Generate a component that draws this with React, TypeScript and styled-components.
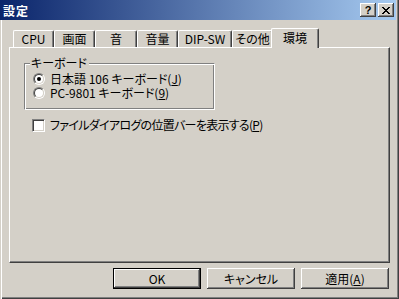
import React from "react";
import styled, { createGlobalStyle } from "styled-components";

const GlobalStyle = createGlobalStyle`
  html, body {
    margin: 0;
    padding: 0;
    background: #d4d0c8;
  }
  body {
    font-family: "Noto Sans CJK JP", "Noto Sans", sans-serif;
    font-size: 12px;
    font-feature-settings: "palt";
    color: #000;
  }
`;

// classic 3d window frame, title bar flush with the top edge
const Window = styled.div`
  width: 399px;
  height: 299px;
  box-sizing: border-box;
  padding: 0 3px 3px 0;
  display: flex;
  flex-direction: column;
  background: #d4d0c8;
  box-shadow: inset 1px 0 0 #d4d0c8, inset 2px 0 0 #ffffff,
    inset -1px -1px 0 #404040, inset -2px -2px 0 #808080;
`;

const TitleBar = styled.div`
  height: 20px;
  display: flex;
  align-items: center;
  padding: 0 2px 0 3px;
  background: linear-gradient(to right, #0a246a, #a6caf0);
`;

const TitleText = styled.div`
  flex: 1;
  color: #fff;
  font-weight: bold;
  font-size: 12px;
  letter-spacing: 1px;
`;

const TitleButtons = styled.div`
  display: flex;
  gap: 2px;
`;

const TitleButton = styled.div`
  width: 16px;
  height: 14px;
  box-sizing: border-box;
  display: flex;
  align-items: center;
  justify-content: center;
  background: #d4d0c8;
  font-family: "Liberation Sans", sans-serif;
  font-weight: bold;
  font-size: 11px;
  box-shadow: inset -1px -1px 0 #404040, inset 1px 1px 0 #ffffff,
    inset -2px -2px 0 #808080;
`;

const Body = styled.div`
  flex: 1;
  display: flex;
  flex-direction: column;
  padding: 8px 6px 0 9px;
`;

const TabStrip = styled.div`
  height: 19px;
  display: flex;
  align-items: flex-end;
  padding-left: 4px;
  position: relative;
  z-index: 1;
`;

const Tab = styled.div<{ $width: number; $active?: boolean }>`
  box-sizing: border-box;
  width: ${({ $width, $active }) => $width + ($active ? 4 : 0)}px;
  height: ${({ $active }) => ($active ? 20 : 17)}px;
  margin: ${({ $active }) => ($active ? "0 -2px -1px -2px" : "0")};
  padding-bottom: ${({ $active }) => ($active ? 3 : 1)}px;
  display: flex;
  align-items: center;
  justify-content: center;
  background: #d4d0c8;
  border-left: 1px solid #fff;
  border-top: 1px solid #fff;
  border-right: 1px solid #404040;
  border-radius: 2px 2px 0 0;
  box-shadow: inset -1px 0 0 #808080;
  position: relative;
  z-index: ${({ $active }) => ($active ? 2 : 1)};
  white-space: nowrap;
`;

const Pane = styled.div`
  height: 216px;
  box-sizing: border-box;
  border-top: 1px solid #fff;
  border-left: 1px solid #fff;
  border-right: 1px solid #404040;
  border-bottom: 1px solid #404040;
  box-shadow: inset -1px -1px 0 #808080;
  padding: 15px 0 0 14px;
`;

const GroupBox = styled.div`
  position: relative;
  width: 191px;
  height: 47px;
  box-sizing: border-box;
  padding: 8px 0 0 8px;
  border: 1px solid #808080;
  border-right-color: #fff;
  border-bottom-color: #fff;
  box-shadow: inset 1px 1px 0 #fff, inset -1px -1px 0 #808080;
`;

const GroupCaption = styled.div`
  position: absolute;
  top: -8px;
  left: 5px;
  padding: 0 2px 0 1px;
  line-height: 14px;
  background: #d4d0c8;
`;

const OptionRow = styled.div`
  height: 14px;
  display: flex;
  align-items: center;
  gap: 5px;
  line-height: 12px;
  white-space: nowrap;
`;

const CheckRow = styled(OptionRow)`
  margin: 8px 0 0 8px;
`;

const Label = styled.span<{ $tight?: boolean }>`
  letter-spacing: ${({ $tight }) => ($tight ? "-0.7px" : "0")};
`;

const RadioCircle = styled.div<{ $checked?: boolean }>`
  width: 12px;
  height: 12px;
  box-sizing: border-box;
  border-radius: 50%;
  border: 1px solid;
  border-color: #808080 #fff #fff #808080;
  position: relative;
  flex: none;
  &::before {
    content: "";
    position: absolute;
    inset: 0;
    border-radius: 50%;
    border: 1px solid;
    border-color: #404040 #d4d0c8 #d4d0c8 #404040;
    background: #fff;
  }
  &::after {
    content: "";
    display: ${({ $checked }) => ($checked ? "block" : "none")};
    position: absolute;
    left: 3px;
    top: 3px;
    width: 4px;
    height: 4px;
    border-radius: 50%;
    background: #000;
  }
`;

const CheckBox = styled.div`
  width: 13px;
  height: 13px;
  box-sizing: border-box;
  flex: none;
  background: #fff;
  border: 1px solid;
  border-color: #808080 #fff #fff #808080;
  box-shadow: inset 1px 1px 0 #404040, inset -1px -1px 0 #d4d0c8;
`;

const ButtonRow = styled.div`
  display: flex;
  justify-content: flex-end;
  gap: 6px;
  margin-top: 5px;
  padding-right: 1px;
`;

const PushButton = styled.div<{ $default?: boolean }>`
  width: 88px;
  height: 21px;
  box-sizing: border-box;
  display: flex;
  align-items: center;
  justify-content: center;
  background: #d4d0c8;
  border: ${({ $default }) => ($default ? "1px solid #000" : "none")};
  box-shadow: inset -1px -1px 0 #404040, inset 1px 1px 0 #ffffff,
    inset -2px -2px 0 #808080;
  white-space: nowrap;
`;

const Key = styled.span`
  text-decoration: underline;
  text-underline-offset: 1px;
`;

function CloseIcon() {
  return (
    <svg width="8" height="7" viewBox="0 0 8 7" shapeRendering="crispEdges">
      <path
        d="M0 0h2v1h-2zM6 0h2v1h-2zM1 1h2v1h-2zM5 1h2v1h-2zM2 2h4v1h-4zM3 3h2v1h-2zM2 4h4v1h-4zM1 5h2v1h-2zM5 5h2v1h-2zM0 6h2v1h-2zM6 6h2v1h-2z"
        fill="#000"
      />
    </svg>
  );
}

const tabs = [
  { label: "CPU", width: 41 },
  { label: "画面", width: 41 },
  { label: "音", width: 42 },
  { label: "音量", width: 41 },
  { label: "DIP-SW", width: 54 },
  { label: "その他", width: 41 },
  { label: "環境", width: 44, active: true },
];

export default function App() {
  return (
    <>
      <GlobalStyle />
      <Window>
        <TitleBar>
          <TitleText>設定</TitleText>
          <TitleButtons>
            <TitleButton>?</TitleButton>
            <TitleButton>
              <CloseIcon />
            </TitleButton>
          </TitleButtons>
        </TitleBar>
        <Body>
          <TabStrip>
            {tabs.map((t) => (
              <Tab key={t.label} $width={t.width} $active={t.active}>
                {t.label}
              </Tab>
            ))}
          </TabStrip>
          <Pane>
            <GroupBox>
              <GroupCaption>キーボード</GroupCaption>
              <OptionRow>
                <RadioCircle $checked />
                <Label>
                  日本語 106 キーボード(<Key>J</Key>)
                </Label>
              </OptionRow>
              <OptionRow>
                <RadioCircle />
                <Label>
                  PC-9801 キーボード(<Key>9</Key>)
                </Label>
              </OptionRow>
            </GroupBox>
            <CheckRow>
              <CheckBox />
              <Label $tight>
                ファイルダイアログの位置バーを表示する(<Key>P</Key>)
              </Label>
            </CheckRow>
          </Pane>
          <ButtonRow>
            <PushButton $default>OK</PushButton>
            <PushButton>キャンセル</PushButton>
            <PushButton>
              適用(<Key>A</Key>)
            </PushButton>
          </ButtonRow>
        </Body>
      </Window>
    </>
  );
}
